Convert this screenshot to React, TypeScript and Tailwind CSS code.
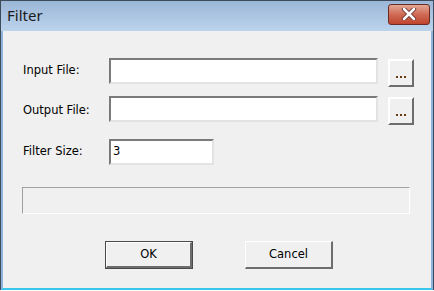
import React from "react";

const ui = { fontFamily: '"DejaVu Sans", Tahoma, sans-serif' };

// sunken edit box, classic Win32 look
function EditBox({ width, value = "" }: { width: string; value?: string }) {
  return (
    <div className={`${width} h-[26px] border-t-2 border-l-2 border-t-[#7a7a7a] border-l-[#7a7a7a] border-b-2 border-r-2 border-b-[#e3e3e3] border-r-[#e3e3e3] bg-white`}>
      <div className="h-full flex items-center pl-[2px] text-[11.5px] text-black" style={ui}>
        {value}
      </div>
    </div>
  );
}

function BrowseButton() {
  return (
    <button className="w-[26px] h-[28px] mt-[1px] border-t-2 border-l-2 border-t-white border-l-white border-b-2 border-r-2 border-b-[#6d6d6d] border-r-[#6d6d6d] bg-[#f0f0f0] flex items-end justify-center pb-[7px]">
      <span className="flex gap-[2px]">
        <span className="w-[2px] h-[2px] bg-[#6a3a12]" />
        <span className="w-[2px] h-[2px] bg-[#6a3a12]" />
        <span className="w-[2px] h-[2px] bg-[#6a3a12]" />
      </span>
    </button>
  );
}

function DialogButton({ label, isDefault }: { label: string; isDefault?: boolean }) {
  return (
    <button
      className={
        isDefault
          ? "w-[88px] h-[28px] border border-[#4a4a4a] bg-[#f0f0f0]"
          : "w-[88px] h-[28px] bg-[#f0f0f0]"
      }
    >
      <div className="w-full h-full border-t border-l border-t-white border-l-white border-b-2 border-r-2 border-b-[#6d6d6d] border-r-[#6d6d6d] flex items-center justify-center text-[11.5px] text-black" style={ui}>
        {label}
      </div>
    </button>
  );
}

export default function App() {
  return (
    <div className="w-[434px] h-[291px] bg-white">
      <div className="w-[434px] h-[290px] border-t border-l border-r border-[#3c4a5a] flex flex-col">
        {/* title bar */}
        <div className="h-[30px] flex items-center justify-between bg-gradient-to-b from-[#9bb7d7] to-[#bcd3ec] pl-[6px] pr-[3px]">
          <span className="text-[15px] text-[#1b1b1b] -mt-[2px]" style={{ fontFamily: '"Noto Sans", "Open Sans", sans-serif' }}>
            Filter
          </span>
          <div className="w-[42px] h-[21px] -mt-[4px] rounded-[3px] border border-[#6b2b22] bg-gradient-to-b from-[#e3a696] via-[#cf6a55] to-[#c0432c] flex items-center justify-center">
            <svg width="16" height="12" viewBox="0 0 16 12">
              <path d="M3 1 L13 11 M13 1 L3 11" stroke="#5a2a24" strokeWidth="4.2" strokeLinecap="round" />
              <path d="M3 1 L13 11 M13 1 L3 11" stroke="#ffffff" strokeWidth="2.6" strokeLinecap="round" />
            </svg>
          </div>
        </div>
        {/* body */}
        <div className="flex-1 border-l-2 border-r-2 border-b-2 border-l-[#8fb4dc] border-r-[#8fb4dc] border-b-[#38c6ea] bg-[#f0f0f0] flex flex-col pl-[20px] text-[11.5px] text-black" style={ui}>
          <div className="mt-[27px] flex h-[28px]">
            <div className="w-[86px] flex items-center -mt-[3px]">Input File:</div>
            <EditBox width="w-[269px]" />
            <div className="w-[10px]" />
            <BrowseButton />
          </div>
          <div className="mt-[10px] flex h-[28px]">
            <div className="w-[86px] flex items-center pt-[2px]">Output File:</div>
            <EditBox width="w-[269px]" />
            <div className="w-[10px]" />
            <BrowseButton />
          </div>
          <div className="mt-[15px] flex h-[26px]">
            <div className="w-[86px] flex items-center">Filter Size:</div>
            <EditBox width="w-[105px]" value="3" />
          </div>
          {/* progress bar */}
          <div className="mt-[22px] ml-[-1px] w-[388px] h-[27px] border-t border-l border-t-[#a0a0a0] border-l-[#a0a0a0] border-b border-r border-b-white border-r-white" />
          <div className="mt-[27px] flex pl-[82px] gap-[52px]">
            <DialogButton label="OK" isDefault />
            <DialogButton label="Cancel" />
          </div>
        </div>
      </div>
    </div>
  );
}
